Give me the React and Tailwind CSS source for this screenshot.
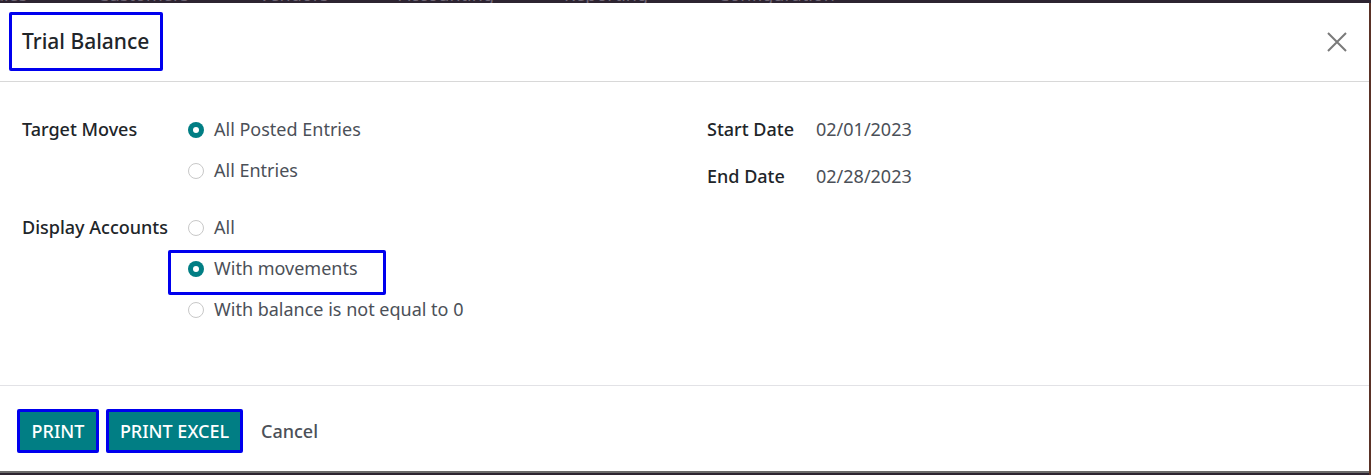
import React from "react";

const Radio = ({ checked, label }) => (
  <label className="flex items-center h-[41px] gap-[10px] text-[18px] text-[#4b5058]">
    {checked ? (
      <span className="w-[16px] h-[16px] rounded-full bg-[#017e84] flex items-center justify-center">
        <span className="w-[6px] h-[6px] rounded-full bg-white" />
      </span>
    ) : (
      <span className="w-[16px] h-[16px] rounded-full border border-[#c8c8c8] bg-white" />
    )}
    <span>{label}</span>
  </label>
);

const App = () => {
  return (
    <div
      className="w-[1371px] h-[475px] bg-[#2d2431] flex flex-col overflow-hidden"
      style={{ fontFamily: '"Noto Sans", "Open Sans", sans-serif' }}
    >
      {/* clipped top menu */}
      <div className="h-[3px] overflow-hidden shrink-0">
        <div className="flex gap-[70px] -mt-[14px] text-[18px] text-[#6f6675] leading-[16px]">
          <span className="-ml-[16px]">Sales</span>
          <span>Customers</span>
          <span>Vendors</span>
          <span>Accounting</span>
          <span>Reporting</span>
          <span>Configuration</span>
        </div>
      </div>

      <div className="flex flex-1">
        <div className="w-[1369px] h-[470px] bg-white flex flex-col border-b-2 border-[#6b6b6b]">
          {/* header */}
          <div className="h-[79px] shrink-0 border-b border-[#d8d8d8] flex items-center justify-between pl-[9px] pr-[20px]">
            <div className="w-[154px] h-[59px] border-[3px] border-[#0000ee] rounded-[2px] flex items-center pl-[10px] -mt-[1px]">
              <h1 className="text-[21px] font-medium text-[#212529] leading-none">
                Trial Balance
              </h1>
            </div>
            <button className="w-[24px] h-[24px] flex items-center justify-center text-[#7a7a7a]">
              <svg width="20" height="20" viewBox="0 0 20 20" fill="none" stroke="currentColor" strokeWidth="2">
                <path d="M1 1 L19 19 M19 1 L1 19" />
              </svg>
            </button>
          </div>

          {/* body */}
          <div className="flex-1 flex pl-[22px] pt-[27px]">
            <div className="w-[685px] flex flex-col">
              <div className="flex">
                <div className="w-[166px] h-[41px] flex items-center text-[18px] font-medium text-[#212529]">
                  Target Moves
                </div>
                <div className="flex flex-col">
                  <Radio checked label="All Posted Entries" />
                  <Radio label="All Entries" />
                </div>
              </div>
              <div className="flex mt-[16px]">
                <div className="w-[166px] h-[41px] flex items-center text-[18px] font-medium text-[#212529]">
                  Display Accounts
                </div>
                <div className="flex flex-col">
                  <Radio label="All" />
                  <div className="-ml-[20px] w-[218px] h-[45px] mt-[2px] -mb-[6px] border-[3px] border-[#0000ee] rounded-[2px] flex items-start pl-[17px]">
                    <div className="-mt-[5px]">
                      <Radio checked label="With movements" />
                    </div>
                  </div>
                  <Radio label="With balance is not equal to 0" />
                </div>
              </div>
            </div>
            <div className="flex flex-col">
              <div className="flex h-[41px] items-center">
                <span className="w-[109px] text-[18px] font-medium text-[#212529]">Start Date</span>
                <span className="text-[18px] text-[#4b5058]">02/01/2023</span>
              </div>
              <div className="flex h-[41px] items-center mt-[6px]">
                <span className="w-[109px] text-[18px] font-medium text-[#212529]">End Date</span>
                <span className="text-[18px] text-[#4b5058]">02/28/2023</span>
              </div>
            </div>
          </div>

          {/* footer */}
          <div className="h-[86px] shrink-0 border-t border-[#e2e2e6] flex items-center pl-[17px] gap-[7px] pt-[5px]">
            <button className="w-[82px] h-[44px] bg-[#017e84] border-[3px] border-[#0000ee] rounded-[2px] text-white text-[18px] font-medium">
              PRINT
            </button>
            <button className="w-[137px] h-[44px] bg-[#017e84] border-[3px] border-[#0000ee] rounded-[2px] text-white text-[18px] font-medium">
              PRINT EXCEL
            </button>
            <button className="ml-[11px] text-[18px] font-medium text-[#4b5058]">
              Cancel
            </button>
          </div>
        </div>
        <div className="w-[2px] bg-[#5a3226]" />
      </div>
    </div>
  );
};

export default App;
